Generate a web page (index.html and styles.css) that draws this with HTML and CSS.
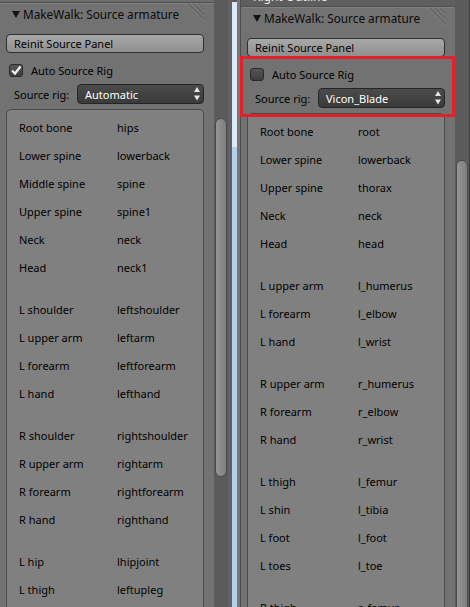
FILE: index.html
```html
<!DOCTYPE html>
<html>
<head>
<meta charset="utf-8">
<link rel="stylesheet" href="styles.css">
</head>
<body>
<div class="screen">
  <div class="editor editor--left">
    <div class="region">
      <div class="topline"></div>
      <div class="panel">
        <div class="panel-head">
          <svg class="tri" width="8" height="7" viewBox="0 0 8 7"><polygon points="0,0 8,0 4,7" fill="#141414"/></svg>
          <span class="panel-title">MakeWalk: Source armature</span>
          <svg class="grip" width="18" height="19" viewBox="0 0 18 19"><g stroke-width="1"><line x1="0" y1="0.5" x2="17.5" y2="18" stroke="#8c8c8c"/><line x1="1" y1="0.5" x2="17.5" y2="17" stroke="#565656"/><line x1="5" y1="0.5" x2="17.5" y2="13" stroke="#8c8c8c"/><line x1="6" y1="0.5" x2="17.5" y2="12" stroke="#565656"/><line x1="10" y1="0.5" x2="17.5" y2="8" stroke="#8c8c8c"/><line x1="11" y1="0.5" x2="17.5" y2="7" stroke="#565656"/></g></svg>
        </div>
        <div class="panel-body">
          <div class="btn">Reinit Source Panel</div>
          <div class="check-row">
            <span class="check"><svg width="12" height="11" viewBox="0 0 12 11"><path d="M2 5.5 L5 8.5 L10.5 1.5" fill="none" stroke="#f2f2f2" stroke-width="2.2"/></svg></span>
            <span class="check-label">Auto Source Rig</span>
          </div>
          <div class="prop-row">
            <span class="prop-label">Source rig:</span>
            <div class="menu"><span class="menu-text">Automatic</span><svg class="updown" width="6" height="14" viewBox="0 0 6 14"><polygon points="0,5 3,0 6,5" fill="#e6e6e6"/><polygon points="0,8.5 6,8.5 3,13.5" fill="#e6e6e6"/></svg></div>
          </div>
          <div class="box">
            <div class="map-row"><span class="bone">Root bone</span><span class="target">hips</span></div>
            <div class="map-row"><span class="bone">Lower spine</span><span class="target">lowerback</span></div>
            <div class="map-row"><span class="bone">Middle spine</span><span class="target">spine</span></div>
            <div class="map-row"><span class="bone">Upper spine</span><span class="target">spine1</span></div>
            <div class="map-row"><span class="bone">Neck</span><span class="target">neck</span></div>
            <div class="map-row"><span class="bone">Head</span><span class="target">neck1</span></div>
            <div class="sep"></div>
            <div class="map-row"><span class="bone">L shoulder</span><span class="target">leftshoulder</span></div>
            <div class="map-row"><span class="bone">L upper arm</span><span class="target">leftarm</span></div>
            <div class="map-row"><span class="bone">L forearm</span><span class="target">leftforearm</span></div>
            <div class="map-row"><span class="bone">L hand</span><span class="target">lefthand</span></div>
            <div class="sep"></div>
            <div class="map-row"><span class="bone">R shoulder</span><span class="target">rightshoulder</span></div>
            <div class="map-row"><span class="bone">R upper arm</span><span class="target">rightarm</span></div>
            <div class="map-row"><span class="bone">R forearm</span><span class="target">rightforearm</span></div>
            <div class="map-row"><span class="bone">R hand</span><span class="target">righthand</span></div>
            <div class="sep"></div>
            <div class="map-row"><span class="bone">L hip</span><span class="target">lhipjoint</span></div>
            <div class="map-row"><span class="bone">L thigh</span><span class="target">leftupleg</span></div>
            <div class="spacer"></div>
          </div>
        </div>
      </div>
    </div>
    <div class="scroll"><div class="thumb thumb--left"></div></div>
  </div>

  <div class="divider">
    <div class="div-gray"></div>
    <div class="div-blue"><div class="div-blue-top"></div></div>
    <div class="div-edge"></div>
  </div>

  <div class="editor editor--right">
    <div class="region">
      <div class="peek"><span class="peek-text">Right Outline</span></div>
      <div class="panel">
        <div class="panel-head">
          <svg class="tri" width="8" height="7" viewBox="0 0 8 7"><polygon points="0,0 8,0 4,7" fill="#141414"/></svg>
          <span class="panel-title">MakeWalk: Source armature</span>
          <svg class="grip" width="18" height="19" viewBox="0 0 18 19"><g stroke-width="1"><line x1="0" y1="0.5" x2="17.5" y2="18" stroke="#8c8c8c"/><line x1="1" y1="0.5" x2="17.5" y2="17" stroke="#565656"/><line x1="5" y1="0.5" x2="17.5" y2="13" stroke="#8c8c8c"/><line x1="6" y1="0.5" x2="17.5" y2="12" stroke="#565656"/><line x1="10" y1="0.5" x2="17.5" y2="8" stroke="#8c8c8c"/><line x1="11" y1="0.5" x2="17.5" y2="7" stroke="#565656"/></g></svg>
        </div>
        <div class="panel-body">
          <div class="btn">Reinit Source Panel</div>
          <div class="check-row">
            <span class="check"></span>
            <span class="check-label">Auto Source Rig</span>
          </div>
          <div class="prop-row">
            <span class="prop-label">Source rig:</span>
            <div class="menu"><span class="menu-text">Vicon_Blade</span><svg class="updown" width="6" height="14" viewBox="0 0 6 14"><polygon points="0,5 3,0 6,5" fill="#e6e6e6"/><polygon points="0,8.5 6,8.5 3,13.5" fill="#e6e6e6"/></svg></div>
          </div>
          <div class="box">
            <div class="map-row"><span class="bone">Root bone</span><span class="target">root</span></div>
            <div class="map-row"><span class="bone">Lower spine</span><span class="target">lowerback</span></div>
            <div class="map-row"><span class="bone">Upper spine</span><span class="target">thorax</span></div>
            <div class="map-row"><span class="bone">Neck</span><span class="target">neck</span></div>
            <div class="map-row"><span class="bone">Head</span><span class="target">head</span></div>
            <div class="sep"></div>
            <div class="map-row"><span class="bone">L upper arm</span><span class="target">l_humerus</span></div>
            <div class="map-row"><span class="bone">L forearm</span><span class="target">l_elbow</span></div>
            <div class="map-row"><span class="bone">L hand</span><span class="target">l_wrist</span></div>
            <div class="sep"></div>
            <div class="map-row"><span class="bone">R upper arm</span><span class="target">r_humerus</span></div>
            <div class="map-row"><span class="bone">R forearm</span><span class="target">r_elbow</span></div>
            <div class="map-row"><span class="bone">R hand</span><span class="target">r_wrist</span></div>
            <div class="sep"></div>
            <div class="map-row"><span class="bone">L thigh</span><span class="target">l_femur</span></div>
            <div class="map-row"><span class="bone">L shin</span><span class="target">l_tibia</span></div>
            <div class="map-row"><span class="bone">L foot</span><span class="target">l_foot</span></div>
            <div class="map-row"><span class="bone">L toes</span><span class="target">l_toe</span></div>
            <div class="sep"></div>
            <div class="map-row"><span class="bone">R thigh</span><span class="target">r_femur</span></div>
          </div>
        </div>
      </div>
    </div>
    <div class="scroll"><div class="thumb thumb--right"></div></div>
    <div class="highlight"></div>
  </div>
</div>
</body>
</html>
```

FILE: styles.css
```css
* { box-sizing: border-box; }
html, body { margin: 0; padding: 0; }
body {
  width: 470px;
  height: 607px;
  overflow: hidden;
  background: #727272;
  font-family: "Noto Sans", "Open Sans", "DejaVu Sans", sans-serif;
  font-size: 11px;
  color: #000;
}
.screen {
  display: flex;
  width: 470px;
  height: 607px;
  overflow: hidden;
}
.editor {
  display: flex;
  height: 607px;
  overflow: hidden;
  flex: none;
}
.editor--left { width: 228px; }
.editor--right {
  width: 229px;
  position: relative;
  overflow: visible;
  border-right: 1px solid #3c3c3c;
}
.region {
  width: 214px;
  flex: none;
  background: #727272;
  height: 607px;
  overflow: hidden;
}
.topline {
  height: 2px;
  background: #6c6c6c;
}
.peek {
  height: 6px;
  overflow: hidden;
  background: #5e5e5e;
  padding-left: 12px;
}
.peek-text {
  display: block;
  margin-top: -10px;
  line-height: 14px;
  font-size: 12px;
  color: #e8e8e8;
}
.panel-head {
  height: 23px;
  border-top: 1px solid #505050;
  box-shadow: inset 0 1px 0 #808080;
  display: flex;
  align-items: center;
  padding-left: 12px;
  padding-right: 9px;
}
.tri { flex: none; margin-top: 0; }
.panel-title {
  margin-left: 3px;
  margin-top: -1px;
  font-size: 11.8px;
  color: #0a0a0a;
  flex: 1;
  white-space: nowrap;
}
.grip { flex: none; align-self: flex-start; margin-top: 0; }
.panel-body {
  padding: 9px 10px 0 6px;
}
.btn {
  height: 19px;
  border: 1px solid #2f2f2f;
  border-radius: 4px;
  background: linear-gradient(#a9a9a9, #8f8f8f);
  padding-left: 7px;
  display: flex;
  align-items: center;
  white-space: nowrap;
}
.check-row {
  margin-top: 7px;
  height: 20px;
  display: flex;
  align-items: center;
  padding-left: 3px;
}
.check {
  width: 14px;
  height: 13px;
  border: 1px solid #2a2a2a;
  border-radius: 3px;
  background: linear-gradient(#565656, #3e3e3e);
  display: flex;
  align-items: center;
  justify-content: center;
  flex: none;
}
.check-label { margin-left: 8px; }
.prop-row {
  margin-top: 4px;
  height: 20px;
  display: flex;
  align-items: center;
}
.prop-label {
  width: 71px;
  padding-left: 8px;
  flex: none;
  white-space: nowrap;
}
.menu {
  flex: 1;
  height: 20px;
  border: 1px solid #252525;
  border-radius: 4px;
  background: linear-gradient(#4b4b4b, #3a3a3a);
  color: #fff;
  display: flex;
  align-items: center;
  padding-left: 7px;
  padding-right: 3px;
}
.menu-text { flex: 1; white-space: nowrap; }
.updown { flex: none; }
.box {
  margin-top: 5px;
  border: 1px solid #4a4a4a;
  border-radius: 5px;
  background: #808080;
  padding-top: 3px;
  padding-left: 12px;
}
.map-row {
  height: 28px;
  display: flex;
  align-items: center;
  white-space: nowrap;
}
.bone { width: 98px; flex: none; }
.sep { height: 14px; }
.spacer { height: 60px; }
.scroll {
  width: 14px;
  flex: none;
  background: #5b5b5b;
  height: 607px;
  padding-left: 1px;
}
.thumb {
  width: 12px;
  border: 1px solid #4a4a4a;
  border-radius: 6px;
  background: linear-gradient(90deg, #969696, #7e7e7e);
}
.thumb--left { margin-top: 118px; height: 359px; }
.thumb--right { margin-top: 160px; height: 480px; }
.divider {
  display: flex;
  width: 13px;
  flex: none;
  height: 607px;
}
.div-gray { width: 4px; background: #616161; }
.div-blue {
  width: 5px;
  background: #b5d0ea;
}
.div-blue-top {
  height: 147px;
  background: #dde9f5;
  border-top: 2px solid #5a5a5a;
}
.div-edge {
  width: 4px;
  background: #777777;
  border-right: 1px solid #4c4c4c;
}
.highlight {
  position: absolute;
  left: -1px;
  top: 56px;
  width: 215px;
  height: 61px;
  border: 3px solid #e5202a;
}
```
